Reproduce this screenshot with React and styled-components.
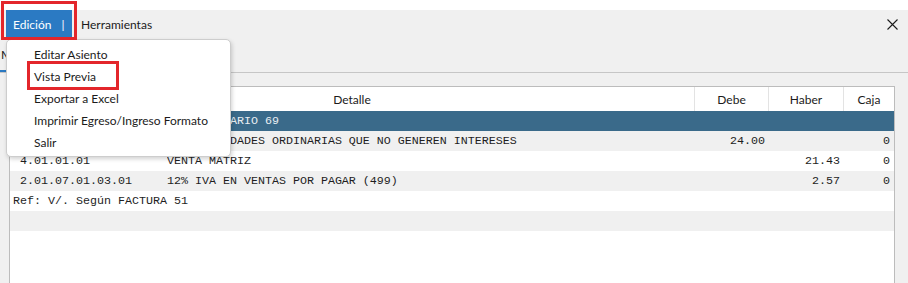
import React from 'react';
import styled, { createGlobalStyle } from 'styled-components';

const GlobalStyle = createGlobalStyle`
    html, body {
        margin: 0;
        padding: 0;
        background: #ffffff;
        overflow: hidden;
    }
    body {
        font-family: 'Lato', 'Liberation Sans', sans-serif;
    }
`;

const Page = styled.div`
    position: relative;
    width: 908px;
    height: 283px;
    padding-top: 10px;
    box-sizing: border-box;
    overflow: hidden;
`;

const Window = styled.div`
    background: #f0f0f0;
    height: 273px;
    display: flex;
    flex-direction: column;
`;

const MenuBar = styled.div`
    height: 28px;
    display: flex;
    align-items: stretch;
    padding-left: 6px;
    font-size: 12px;
    color: #1b1b1b;
`;

const MenuItem = styled.div`
    display: flex;
    align-items: center;
    box-sizing: border-box;
    width: ${props => (props.$active ? '66px' : 'auto')};
    padding: 0 8px 0 ${props => (props.$active ? '7px' : '9px')};
    gap: 10px;
    background: ${props => (props.$active ? '#2b7ac3' : 'transparent')};
    color: ${props => (props.$active ? '#ffffff' : '#1b1b1b')};
`;

const CloseButton = styled.div`
    margin-left: auto;
    margin-right: 10px;
    display: flex;
    align-items: center;
    svg {
        display: block;
    }
`;

const TabStrip = styled.div`
    height: 34px;
    border-bottom: 1px solid #c6c6c6;
    display: flex;
    align-items: stretch;
`;

const Tab = styled.div`
    display: flex;
    align-items: center;
    padding: 0 10px 0 1px;
    font-size: 12px;
    color: #1b1b1b;
    border-bottom: 2px solid #2b7ac3;
`;

const Panel = styled.div`
    flex: 1;
    padding: 13px 13px 0 9px;
    display: flex;
    min-height: 0;
`;

const Grid = styled.div`
    flex: 1;
    background: #ffffff;
    border: 1px solid #bcbcbc;
    border-bottom: none;
    display: flex;
    flex-direction: column;
`;

const HeaderRow = styled.div`
    display: grid;
    grid-template-columns: 684px 74px 75px 51px;
    height: 24px;
    font-size: 12px;
    color: #1b1b1b;
`;

const HeaderCell = styled.div`
    display: flex;
    align-items: center;
    justify-content: center;
    border-left: ${props => (props.$first ? 'none' : '1px solid #e3e3e3')};
`;

const Row = styled.div`
    display: grid;
    grid-template-columns: 157px 527px 74px 75px 51px;
    height: 20px;
    align-items: center;
    font-family: 'Liberation Mono', monospace;
    font-size: 11.67px;
    white-space: pre;
    background: ${props => (props.$selected ? '#3a6a8a' : props.$shade ? '#f0f0f0' : '#ffffff')};
    color: ${props => (props.$selected ? '#e9eef2' : '#1e1e1e')};
`;

const Cell = styled.div`
    overflow: hidden;
    padding-left: ${props => props.$pad || 0}px;
    padding-right: ${props => (props.$num ? props.$right || 3 : 0)}px;
    text-align: ${props => (props.$num ? 'right' : 'left')};
`;

const NoteCell = styled.div`
    grid-column: 1 / -1;
    padding-left: 3px;
`;

const DropMenu = styled.div`
    position: absolute;
    left: 6px;
    top: 39px;
    width: 225px;
    height: 118px;
    box-sizing: border-box;
    padding: 3px 0 3px;
    background: #ffffff;
    border: 1px solid #cdcdcd;
    border-radius: 5px;
    box-shadow: 1px 2px 4px rgba(0, 0, 0, 0.18);
    font-size: 12px;
    color: #1b1b1b;
`;

const DropItem = styled.div`
    height: 22px;
    display: flex;
    align-items: center;
    padding-left: 27px;
`;

const Highlight = styled.div`
    position: absolute;
    border: 3px solid #e3262b;
    box-sizing: border-box;
`;

const rows = [
    { code: '', detail: 'VENTAS DIARIO 69', debe: '', haber: '', caja: '' },
    { code: '1.01.02.05.01', detail: 'DE ACTIVIDADES ORDINARIAS QUE NO GENEREN INTERESES', debe: '24.00', haber: '', caja: '0' },
    { code: '4.01.01.01', detail: 'VENTA MATRIZ', debe: '', haber: '21.43', caja: '0' },
    { code: '2.01.07.01.03.01', detail: '12% IVA EN VENTAS POR PAGAR (499)', debe: '', haber: '2.57', caja: '0' },
];

const menuOptions = ['Editar Asiento', 'Vista Previa', 'Exportar a Excel', 'Imprimir Egreso/Ingreso Formato', 'Salir'];

export default function App() {
    return (
        <>
            <GlobalStyle />
            <Page>
                <Window>
                    <MenuBar>
                        <MenuItem $active>
                            <span>Edición</span>
                            <span>|</span>
                        </MenuItem>
                        <MenuItem>Herramientas</MenuItem>
                        <CloseButton>
                            <svg width="11" height="11" viewBox="0 0 11 11">
                                <path d="M0.5 0.5 L10.5 10.5 M10.5 0.5 L0.5 10.5" stroke="#1b1b1b" strokeWidth="1.1" fill="none" />
                            </svg>
                        </CloseButton>
                    </MenuBar>
                    <TabStrip>
                        <Tab>Movimientos</Tab>
                    </TabStrip>
                    <Panel>
                        <Grid>
                            <HeaderRow>
                                <HeaderCell $first>Detalle</HeaderCell>
                                <HeaderCell>Debe</HeaderCell>
                                <HeaderCell>Haber</HeaderCell>
                                <HeaderCell>Caja</HeaderCell>
                            </HeaderRow>
                            {rows.map((r, i) => (
                                <Row key={i} $selected={i === 0} $shade={i % 2 === 1}>
                                    <Cell $pad={10}>{r.code}</Cell>
                                    <Cell>{r.detail}</Cell>
                                    <Cell $num>{r.debe}</Cell>
                                    <Cell $num>{r.haber}</Cell>
                                    <Cell $num $right={4}>{r.caja}</Cell>
                                </Row>
                            ))}
                            <Row>
                                <NoteCell>Ref: V/. Según FACTURA 51</NoteCell>
                            </Row>
                            <Row $shade />
                        </Grid>
                    </Panel>
                </Window>
                <DropMenu>
                    {menuOptions.map(opt => (
                        <DropItem key={opt}>{opt}</DropItem>
                    ))}
                </DropMenu>
                <Highlight style={{ left: 1, top: 1, width: 76, height: 39 }} />
                <Highlight style={{ left: 27, top: 61, width: 92, height: 29 }} />
            </Page>
        </>
    );
}
